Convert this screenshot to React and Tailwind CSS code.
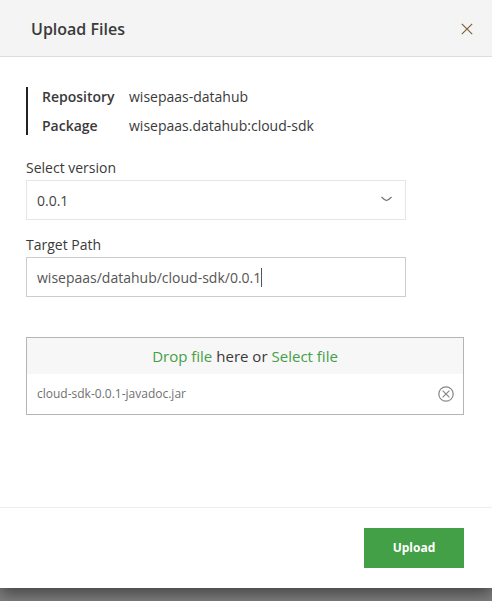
import { useState } from "react";

function CloseIcon() {
  return (
    <svg width="12" height="12" viewBox="0 0 12 12" fill="none" stroke="currentColor" strokeWidth="1.1" aria-hidden="true">
      <path d="M.8.8l10.4 10.4M11.2.8L.8 11.2" />
    </svg>
  );
}

function ChevronIcon() {
  return (
    <svg className="pointer-events-none absolute top-4 right-3.5" width="11" height="6" viewBox="0 0 11 6" fill="none" stroke="#7d6f66" strokeWidth="1.1" aria-hidden="true">
      <path d="M.5 1Q3 3.6 5.5 4.6Q8 3.6 10.5 1" />
    </svg>
  );
}

function RemoveIcon() {
  return (
    <svg width="16" height="16" viewBox="0 0 16 16" fill="none" stroke="currentColor" strokeWidth="1.2" aria-hidden="true">
      <circle cx="8" cy="8" r="7.2" />
      <path d="M4.6 4.6l6.8 6.8M11.4 4.6l-6.8 6.8" />
    </svg>
  );
}

export default function App() {
  const [path, setPath] = useState("wisepaas/datahub/cloud-sdk/0.0.1");
  const [files, setFiles] = useState(["cloud-sdk-0.0.1-javadoc.jar"]);

  return (
    <div className="min-h-screen overflow-hidden bg-[#7f7f7f] pb-3 font-['Open_Sans','Noto_Sans',sans-serif] text-sm text-[#3a3a3a]">
      <section role="dialog" aria-labelledby="title" className="bg-white shadow-[0_5px_15px_rgba(0,0,0,0.5)]">
        <header className="flex h-[57px] items-center justify-between border-b border-[#dddddd] bg-[#f4f4f4] pt-px pr-[19px] pl-[31px]">
          <h1 id="title" className="text-base font-semibold">Upload Files</h1>
          <button type="button" aria-label="Close" className="text-[#7a5c30]"><CloseIcon /></button>
        </header>

        <div className="flex flex-col pt-[30px] pr-7 pb-[92px] pl-[26px]">
          <dl className="grid h-12 grid-cols-[87px_1fr] content-center gap-y-[9px] border-l-2 border-[#222222] pl-3.5 leading-5">
            <dt className="font-semibold">Repository</dt>
            <dd>wisepaas-datahub</dd>
            <dt className="font-semibold">Package</dt>
            <dd>wisepaas.datahub:cloud-sdk</dd>
          </dl>

          <label htmlFor="version" className="mt-[22px] mb-px leading-[22px]">Select version</label>
          <div className="relative max-w-[380px]">
            <select id="version" className="h-10 w-full appearance-none border border-[#e6e6e6] bg-white px-2.5 pt-0.5 text-sm text-[#444444]">
              <option>0.0.1</option>
            </select>
            <ChevronIcon />
          </div>

          <label htmlFor="path" className="mt-3.5 mb-px leading-[22px]">Target Path</label>
          <div className="relative max-w-[380px]">
            <input
              id="path"
              type="text"
              value={path}
              onChange={(e) => setPath(e.target.value)}
              className="h-10 w-full border border-[#cccccc] bg-white px-2.5 text-sm text-[#555555] outline-none"
            />
            <span className="pointer-events-none absolute top-[11px] left-[235px] h-[19px] w-px bg-[#555555]" />
          </div>

          <div className="mt-10 border border-[#b5b5b5]">
            <p className="flex h-9 items-center justify-center gap-1 bg-[#f7f7f7] pt-0.5 text-[15px]">
              <span className="text-[#43a047]">Drop file</span>
              <span>here or</span>
              <button type="button" className="text-[#43a047]">Select file</button>
            </p>
            <ul>
              {files.map((name) => (
                <li key={name} className="flex h-10 items-center justify-between pr-[9px] pl-2.5 text-xs text-[#707070]">
                  {name}
                  <button type="button" aria-label={`Remove ${name}`} onClick={() => setFiles([])} className="text-[#888888]">
                    <RemoveIcon />
                  </button>
                </li>
              ))}
            </ul>
          </div>
        </div>

        <footer className="flex justify-end border-t border-[#eeeeee] px-7 py-5">
          <button type="button" className="h-10 w-[100px] bg-[#43a047] text-xs font-bold text-white">Upload</button>
        </footer>
      </section>
    </div>
  );
}
